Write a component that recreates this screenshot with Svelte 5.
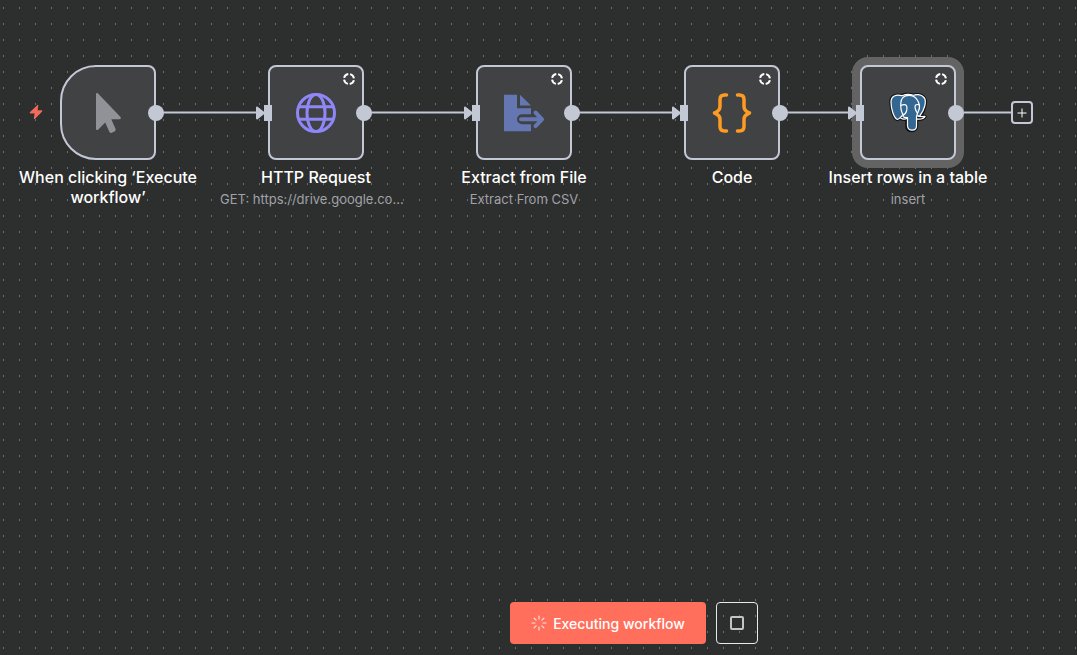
<script>
  const nodes = [
    { id: 'trigger', kind: 'trigger', x: 60, title: 'When clicking ‘Execute workflow’' },
    { id: 'http', kind: 'globe', x: 268, title: 'HTTP Request', note: 'GET: https://drive.google.com/uc' },
    { id: 'extract', kind: 'file', x: 476, title: 'Extract from File', note: 'Extract From CSV' },
    { id: 'code', kind: 'code', x: 684, title: 'Code' },
    { id: 'insert', kind: 'postgres', x: 860, title: 'Insert rows in a table', note: 'insert', selected: true }
  ];
  const edges = nodes.slice(1).map((n, i) => ({ from: nodes[i].x + 96, to: n.x }));
  const last = nodes[nodes.length - 1];
</script>

<main class="canvas">
  <svg class="edges" aria-hidden="true">
    {#each edges as e}
      <path d="M{e.from} 112.5H{e.to - 8}" />
    {/each}
    <path d="M{last.x + 96} 112.5H1011" />
  </svg>

  {#each nodes as n (n.id)}
    <article class="node" class:selected={n.selected} style:left="{n.x}px">
      <div class="box" class:start={n.kind === 'trigger'}>
        {#if n.kind === 'trigger'}
          <svg class="icon" viewBox="0 0 40 40" aria-hidden="true">
            <path fill="#909298" d="M8 1.200C8 .2 9.200-.4 10 .5L32.300 23.700C33.500 25 32.800 26.300 31.200 26.300H23.300L27.500 35.800C28 37 27.500 38 26.500 38.500L23.800 39.700C22.700 40.200 21.700 39.700 21.200 38.600L17.200 29.600L10.300 36.600C9.300 37.600 8 37 8 35.700Z" />
          </svg>
        {:else if n.kind === 'globe'}
          <svg class="icon" viewBox="0 0 40 40" fill="none" stroke="#8f87f7" stroke-width="3" aria-hidden="true">
            <circle cx="20" cy="20" r="18.500" />
            <ellipse cx="20" cy="20" rx="9" ry="18.500" />
            <path d="M3 13.800H37M3 26.200H37" />
          </svg>
        {:else if n.kind === 'file'}
          <svg class="icon" viewBox="0 0 40 40" aria-hidden="true">
            <path fill="#6577b3" d="M0 1.700H13V15.200H27V21.300H18A5 5 0 0 0 18 31.300H27V38.200H0Z" />
            <path fill="#6577b3" d="M16 1.700L27 12.500H16Z" />
            <path d="M17 26.300H38M31.500 19.500L38 26.300L31.500 33.100" fill="none" stroke="#6577b3" stroke-width="4" stroke-linecap="round" stroke-linejoin="round" />
          </svg>
        {:else if n.kind === 'code'}
          <svg class="icon" viewBox="0 0 40 40" fill="none" stroke="#ff9b22" stroke-width="3.500" stroke-linecap="round" stroke-linejoin="round" aria-hidden="true">
            <path d="M14.500 2H12.500Q8 2 8 6.500V13.500Q8 18 2.500 20Q8 22 8 26.500V33.500Q8 38 12.500 38H14.500" />
            <path d="M25.500 2H27.500Q32 2 32 6.500V13.500Q32 18 37.500 20Q32 22 32 26.500V33.500Q32 38 27.500 38H25.500" />
          </svg>
        {:else}
          <svg class="icon" viewBox="0 0 40 40" stroke-linejoin="round" stroke-linecap="round" aria-hidden="true">
            <path fill="#101214" stroke="#101214" stroke-width="3.400" d="M13.500 2.700C8 1 3 3 3 9C3 15 5.500 24.500 9 26.200C11 27 13 24 14.500 22.500L13 25.500C15 26.600 17 26.500 19 26V34C19 39 28.500 39 28.500 33V26.500C32 26.500 36 25.500 37 23.700L32.500 23C36.500 17 39 8 36 4.500C33 1 28 1.200 25.500 2.300C21 .8 16.500 1.500 13.500 2.700Z" />
            <path fill="none" stroke="#fff" stroke-width="1.300" d="M13 25.300C15 26.500 17.500 26.300 19.500 25M28 26C32 26.500 36 25.500 37 23.500C34 23.800 31 24 29 22.500" />
            <g fill="#336791" stroke="#fff" stroke-width="1.200">
              <path d="M14 2.700C8 1 3 3 3 9C3 15 5.500 24.500 9 26.200C11 27 13 24 15 21.500L20 21L28 23L32 22.500C36.500 17 39 8 36 4.500C33 1 28 1.200 25.500 2.300C21 .8 17 1.500 14 2.700Z" />
              <path d="M15.500 22C12 18 13 14 12.800 10.500C12.800 5 16 2.400 21 2.400C27.500 2.400 31 8 31.500 13C32 17 29 19.500 28.500 24V33C28.500 38.500 20 38.500 19.500 33V24.500C17.500 25 16 24.500 15 23.500" />
              <path d="M13 12.500C15.500 11 18.500 11.300 18.800 13.500C19.300 17 18 20.500 15.500 22" fill="none" />
              <path d="M31.200 11.800C28.500 11 27 12 27 14C27.200 17 28.500 18.500 29.200 20" fill="none" />
            </g>
          </svg>
        {/if}

        {#if n.kind !== 'trigger'}
          <svg class="pending" viewBox="0 0 14 14" aria-hidden="true">
            <circle cx="7" cy="7" r="5" pathLength="80" />
          </svg>
          <svg class="input" viewBox="0 0 16 16" aria-hidden="true">
            <path class="arrow" d="M1 2.500L8 8L1 13.500Z" />
            <path d="M8 0H16V16H8Z" />
          </svg>
        {/if}
        <span class="output"></span>
      </div>
      <div class="caption">
        <h2>{n.title}</h2>
        {#if n.note}<p>{n.note}</p>{/if}
      </div>
    </article>
  {/each}

  <svg class="bolt" viewBox="0 0 14 16" aria-hidden="true">
    <path d="M8.500 1L.8 8.200Q.3 9.500 1.500 9.600H5.600L4.800 14.500Q5 15.300 5.800 15L13.200 7.500Q13.600 6.300 12.500 6.300H8.600L9.300 1.400Q9.200 .6 8.500 1Z" />
  </svg>

  <button class="add" aria-label="Add node">
    <svg viewBox="0 0 10 10" aria-hidden="true"><path d="M5 .5V9.500M.5 5H9.500" /></svg>
  </button>

  <footer class="actions">
    <button class="run">
      <svg viewBox="0 0 16 16" aria-hidden="true">
        {#each [0, 45, 90, 135, 180, 225, 270, 315] as a}
          <path d="M8 1V4" transform="rotate({a} 8 8)" />
        {/each}
      </svg>
      Executing workflow
    </button>
    <button class="stop" aria-label="Stop execution">
      <svg viewBox="0 0 14 14" aria-hidden="true"><rect x="1" y="1" width="12" height="12" rx="1" /></svg>
    </button>
  </footer>
</main>

<style>
  :global(body) {
    margin: 0;
    background: #2d2e2e;
  }

  .canvas {
    position: relative;
    display: flex;
    flex-direction: column;
    justify-content: flex-end;
    box-sizing: border-box;
    min-height: 100vh;
    overflow: hidden;
    padding-bottom: 11px;
    font-family: Inter, 'Open Sans', sans-serif;
    background-color: #2d2e2e;
    background-image: conic-gradient(from 0deg at 1px 2px, transparent 75%, #6b6c6d 0);
    background-size: 16px 16px;
    background-position: 3px 7px;
  }

  .edges {
    position: absolute;
    inset: 0;
    width: 100%;
    height: 100%;
    fill: none;
    stroke: #c3c8d5;
    stroke-width: 2;
  }

  .node {
    position: absolute;
    top: 65px;
    width: 96px;
  }

  .box {
    position: relative;
    display: grid;
    place-items: center;
    box-sizing: border-box;
    height: 95px;
    border: 2px solid #c3c8d5;
    border-radius: 8px;
    background: #414244;
  }

  .box.start {
    border-radius: 36px 8px 8px 36px;
  }

  .selected .box {
    box-shadow: 0 0 0 8px #636363;
  }

  .icon {
    width: 40px;
    height: 40px;
    overflow: visible;
  }

  .pending {
    position: absolute;
    top: 5px;
    right: 6px;
    width: 14px;
    height: 14px;
    fill: none;
    stroke: #fff;
    stroke-width: 2;
    stroke-dasharray: 15 5;
    stroke-dashoffset: -3;
  }

  .input {
    position: absolute;
    left: -14px;
    width: 16px;
    height: 16px;
    fill: #c3c8d5;
  }

  .input .arrow {
    stroke: #c3c8d5;
    stroke-width: 2;
    stroke-linejoin: round;
  }

  .output {
    position: absolute;
    right: -10px;
    width: 16px;
    height: 16px;
    border-radius: 50%;
    background: #c3c8d5;
  }

  .caption {
    width: 192px;
    margin: 7px -48px 0;
    text-align: center;
  }

  h2,
  p {
    margin: 0;
  }

  h2 {
    color: #fff;
    font-size: 16px;
    font-weight: 500;
    line-height: 20px;
  }

  p {
    margin-top: 4px;
    overflow: hidden;
    color: #a0a2a7;
    font-size: 13px;
    line-height: 16px;
    text-overflow: ellipsis;
    white-space: nowrap;
  }

  .bolt {
    position: absolute;
    top: 104px;
    left: 29px;
    width: 14px;
    height: 16px;
    fill: #f26a5c;
  }

  button {
    display: flex;
    align-items: center;
    justify-content: center;
    box-sizing: border-box;
    padding: 0;
    font-family: inherit;
    cursor: pointer;
  }

  .add {
    position: absolute;
    top: 101px;
    left: 1011px;
    width: 22px;
    height: 23px;
    border: 2px solid #c3c8d5;
    border-radius: 4px;
    background: #2d2e2e;
  }

  .add svg {
    width: 10px;
    height: 10px;
    stroke: #fff;
  }

  .actions {
    display: flex;
    justify-content: center;
    gap: 10px;
    padding-left: 191px;
  }

  .run {
    gap: 6px;
    height: 42px;
    padding: 0 21px;
    border: 0;
    border-radius: 4px;
    background: #ff6f5c;
    color: #fff;
    font-size: 14px;
    font-weight: 500;
  }

  .run svg {
    width: 16px;
    height: 16px;
    stroke: #ffe4df;
    stroke-width: 1.2;
    stroke-linecap: round;
  }

  .stop {
    width: 42px;
    height: 42px;
    border: 1px solid #e8e9ec;
    border-radius: 4px;
    background: transparent;
  }

  .stop svg {
    width: 14px;
    height: 14px;
    fill: none;
    stroke: #c3c4c8;
    stroke-width: 2;
  }
</style>
